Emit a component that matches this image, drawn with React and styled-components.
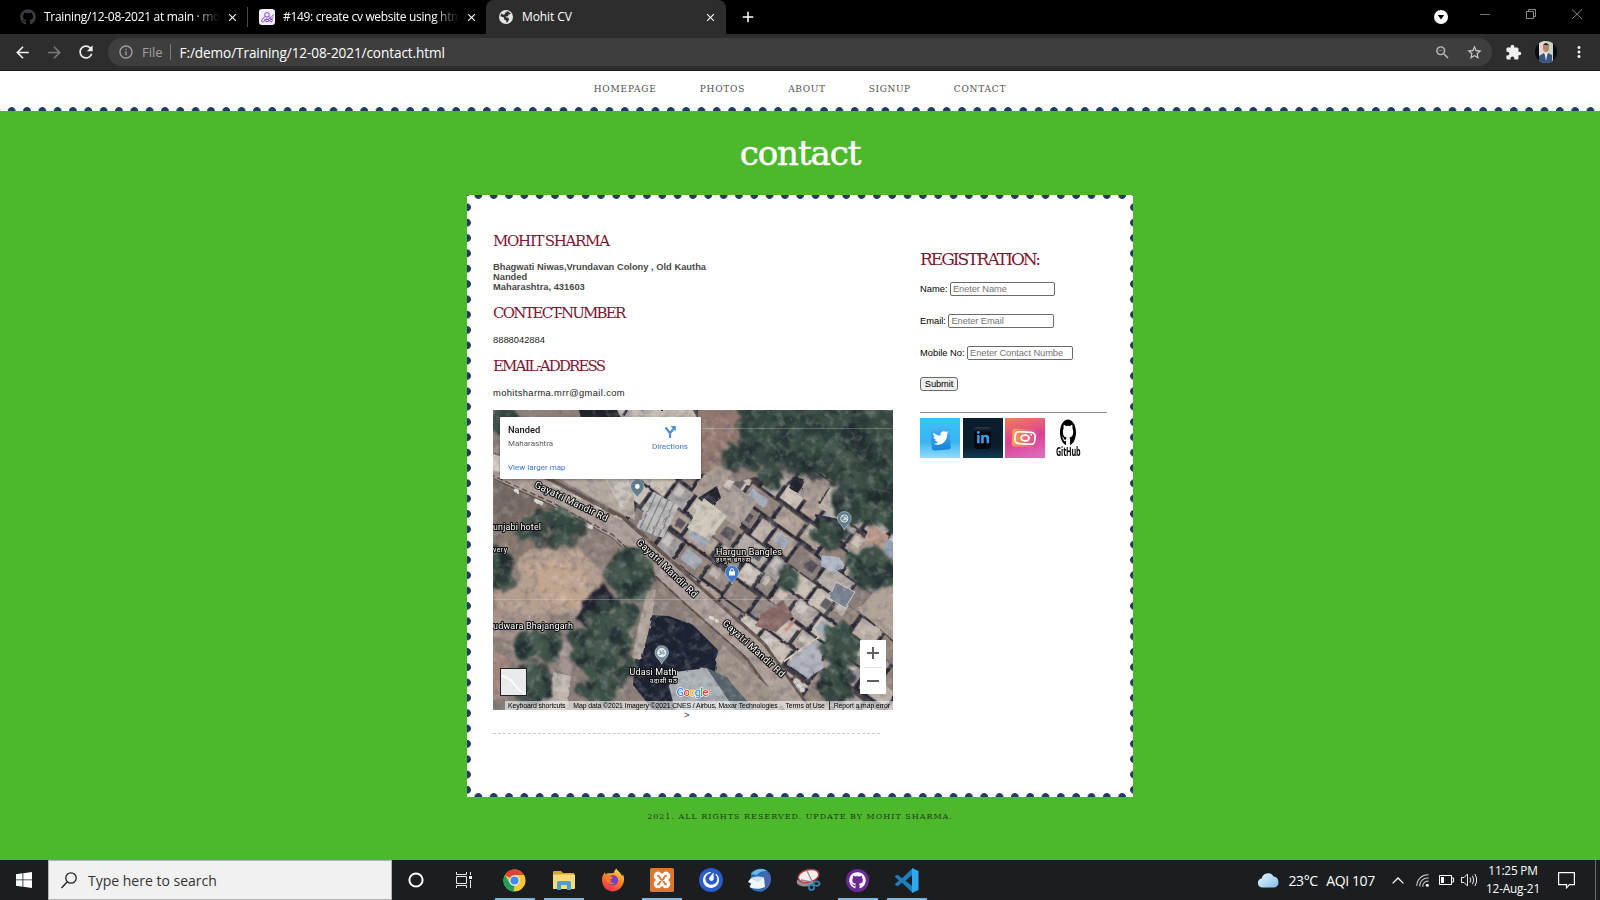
import React from "react";
import styled, { createGlobalStyle, css } from "styled-components";
import { FaGithub, FaTwitter, FaLinkedinIn } from "react-icons/fa";
import {
  MdArrowBack,
  MdArrowForward,
  MdRefresh,
  MdInfoOutline,
  MdZoomOut,
  MdStarBorder,
  MdExtension,
  MdMoreVert,
  MdClose,
  MdAdd,
} from "react-icons/md";
import { SiMattermost } from "react-icons/si";

const UI = `"Open Sans", "Noto Sans", sans-serif`;
const SLAB = `"DejaVu Serif", serif`;
const ARIAL = `"Liberation Sans", Arial, sans-serif`;
const GREEN = "#4eb82d";
const NAVY = "#253a63";

const GlobalStyle = createGlobalStyle`
  * { box-sizing: border-box; }
  body { margin: 0; background: ${GREEN}; overflow: hidden; }
  h1, h2, h3, p { margin: 0; }
  svg { display: block; }
`;

const Screen = styled.div`
  width: 1600px;
  height: 900px;
  display: flex;
  flex-direction: column;
  overflow: hidden;
`;

/* ---------- browser chrome ---------- */

const TabStrip = styled.div`
  height: 34px;
  flex: none;
  display: flex;
  background: #000;
  color: #fff;
  font: 12px ${UI};
`;

const Tab = styled.div`
  width: ${(p) => p.$width}px;
  padding-left: ${(p) => p.$pad}px;
  display: flex;
  align-items: center;
  flex: none;
  border-radius: 8px 8px 0 0;
  background: ${(p) => (p.$active ? "#2d2d2d" : "transparent")};
`;

const Favicon = styled.span`
  width: 16px;
  height: 16px;
  flex: none;
  margin-right: 8px;
  display: grid;
  place-items: center;
  border-radius: 3px;
  color: ${(p) => p.$color || "#fff"};
  background: ${(p) => p.$bg || "transparent"};
`;

const TabTitle = styled.span`
  width: 180px;
  padding-bottom: 1px;
  overflow: hidden;
  white-space: nowrap;
  letter-spacing: ${(p) => p.$track}px;
  ${(p) =>
    p.$fade &&
    css`
      mask-image: linear-gradient(90deg, #000 150px, transparent 176px);
    `}
`;

const TabClose = styled(MdClose)`
  margin-left: 2px;
  flex: none;
`;

const TabDivider = styled.i`
  width: 1px;
  height: 20px;
  margin: 7px 0 0;
  background: #4a4a4a;
`;

const NewTab = styled.div`
  width: 44px;
  display: grid;
  place-items: center;
`;

const WindowControls = styled.div`
  margin-left: auto;
  display: flex;
  align-items: center;
`;

const Toolbar = styled.div`
  height: 37px;
  flex: none;
  display: flex;
  align-items: center;
  background: #2d2d2d;
  border-bottom: 1px solid #1c1c1c;
  color: #e8e8e8;
  padding-left: 12px;
`;

const ToolIcon = styled.span`
  display: grid;
  justify-items: center;
  color: ${(p) => (p.$dim ? "#7b7b7b" : "#f0f0f0")};
  width: ${(p) => p.$w || 32}px;
`;

const AddressBar = styled.div`
  width: 1384px;
  height: 28px;
  display: flex;
  align-items: center;
  border-radius: 14px;
  background: #3e3e3e;
  padding: 0 2px 0 10px;
  font: 13px ${UI};
`;

const Scheme = styled.span`
  color: #a2a2a2;
  margin-left: 8px;
  padding-right: 7px;
  border-right: 1px solid #7a7a7a;
  line-height: 16px;
`;

const Url = styled.span`
  color: #fff;
  margin-left: 9px;
  flex: 1;
  white-space: nowrap;
  font-size: 13.6px;
  letter-spacing: -0.1px;
`;

const Avatar = styled.span`
  width: 22px;
  height: 22px;
  border-radius: 50%;
  overflow: hidden;
  background: #0a0a12;
`;

/* ---------- page ---------- */

const dotsRow = (x, y) => css`
  background-image: radial-gradient(circle at 50% 50%, ${NAVY} 3.5px, transparent 4.3px);
  background-size: 15.333px 12px;
  background-position: ${x}px ${y}px;
  background-repeat: repeat-x;
`;

const SiteNav = styled.nav`
  height: 40px;
  flex: none;
  background-color: #fff;
  ${dotsRow(4, 34)}
  display: flex;
  justify-content: center;
  gap: 43px;
  padding-top: 11px;
  font: 9px/14px ${SLAB};
  color: #4f4f4f;
`;

const NavLink = styled.a`
  letter-spacing: ${(p) => p.$track}px;
`;

const Main = styled.main`
  flex: 1;
  min-height: 0;
  display: flex;
  flex-direction: column;
  align-items: center;
  background: ${GREEN};
`;

const PageTitle = styled.h1`
  height: 84px;
  padding-top: 18px;
  font: 400 34px/48px ${SLAB};
  color: #fff;
  letter-spacing: -1.05px;
  -webkit-text-stroke: 0.5px #fff;
`;

const Card = styled.section`
  width: 666px;
  height: 602px;
  flex: none;
  display: flex;
  padding: 0 26px;
  background-color: #fff;
  background-image: radial-gradient(circle, ${NAVY} 3.5px, transparent 4.3px),
    radial-gradient(circle, ${NAVY} 3.5px, transparent 4.3px),
    radial-gradient(circle, ${NAVY} 3.5px, transparent 4.3px),
    radial-gradient(circle, ${NAVY} 3.5px, transparent 4.3px);
  background-size: 15.333px 12px, 15.333px 12px, 12px 15.333px, 12px 15.333px;
  background-position: 3.7px -6px, 3.7px 596px, -6px 4.7px, 660.5px 4.7px;
  background-repeat: repeat-x, repeat-x, repeat-y, repeat-y;
`;

const Left = styled.div`
  width: 400px;
  padding-top: 37px;
  display: flex;
  flex-direction: column;
`;

const Heading = styled.h2`
  font: 400 ${(p) => p.$size || 15}px/18px ${SLAB};
  letter-spacing: ${(p) => p.$track}px;
  word-spacing: -2px;
  margin-top: ${(p) => p.$top || 0}px;
  color: #7c1632;
  white-space: nowrap;
  align-self: flex-start;
`;

const Detail = styled.p`
  font: ${(p) => (p.$bold ? 700 : 400)} 9.33px/10px ${ARIAL};
  color: ${(p) => (p.$bold ? "#484848" : "#222")};
  letter-spacing: ${(p) => p.$track}px;
  margin: ${(p) => p.$margin};
  align-self: flex-start;
`;

const MapFrame = styled.div`
  position: relative;
  width: 400px;
  height: 300px;
  overflow: hidden;
  background: #857870;
  font-family: Roboto, sans-serif;
`;

const PlaceCard = styled.div`
  position: absolute;
  left: 7px;
  top: 7px;
  width: 201px;
  height: 62px;
  padding: 7px 13px 0 8px;
  display: flex;
  justify-content: space-between;
  background: #fff;
  border-radius: 1px;
  box-shadow: 0 1px 3px rgba(0, 0, 0, 0.35);
  font-size: 8px;
`;

const PlaceText = styled.div`
  display: flex;
  flex-direction: column;
  color: #5b5b5b;
  line-height: 10px;
`;

const PlaceName = styled.b`
  font: 500 9.3px/11px Roboto, sans-serif;
  color: #111;
  margin-bottom: 4px;
`;

const BlueLink = styled.span`
  color: #3d73c8;
  margin-top: ${(p) => p.$top || 0}px;
`;

const Directions = styled.div`
  display: flex;
  flex-direction: column;
  align-items: center;
  gap: 4px;
  line-height: 10px;
  padding-top: 1px;
`;

const ZoomControl = styled.div`
  position: absolute;
  right: 7px;
  top: 230px;
  width: 26px;
  height: 54px;
  background: #fff;
  border-radius: 1px;
`;

const Thumb = styled.div`
  position: absolute;
  left: 7px;
  top: 258px;
  width: 27px;
  height: 28px;
  border: 1px solid #222;
  background: #e8eaed;
`;

const Attribution = styled.div`
  position: absolute;
  right: 0;
  bottom: 0;
  width: 388px;
  height: 9px;
  padding: 0 3px;
  display: flex;
  justify-content: space-between;
  background: rgba(245, 245, 245, 0.62);
  color: #000;
  font: 6.9px/9px ${ARIAL};
  letter-spacing: -0.11px;
  white-space: nowrap;
`;

const ReportLink = styled.span`
  margin-left: -4px;
  padding-left: 4px;
  border-left: 1px solid #333;
`;

const Stray = styled.span`
  padding-left: 191px;
  font: 9.33px/10px ${ARIAL};
  color: #333;
`;

const Dashed = styled.div`
  width: 387px;
  margin-top: 12.5px;
  border-top: 1px dashed #c8c8c8;
`;

const Right = styled.div`
  width: 187px;
  margin-left: 27px;
  padding-top: 55px;
  font: 9.33px ${ARIAL};
  color: #000;
`;

const Form = styled.form`
  padding-top: 14px;
`;

const Field = styled.label`
  height: 14px;
  margin-bottom: 18px;
  display: flex;
  align-items: center;
  gap: 2.5px;
  white-space: nowrap;
`;

const Input = styled.input`
  width: 105.5px;
  height: 14px;
  padding: 0 2px;
  border: 1px solid #6a6a6a;
  border-radius: 2px;
  background: #fff;
  font: 9.33px ${ARIAL};
  letter-spacing: -0.1px;
  &::placeholder {
    color: #757575;
    opacity: 1;
  }
`;

const Submit = styled.button`
  display: block;
  width: 38px;
  height: 14px;
  margin-top: -1px;
  padding: 0;
  border: 1px solid #6a6a6a;
  border-radius: 3px;
  background: #efefef;
  font: 9.33px/11px ${ARIAL};
  letter-spacing: -0.1px;
  color: #000;
`;

const Rule = styled.hr`
  margin: 21px 0 5px;
  border: 0;
  border-top: 1px solid #8a8a8a;
`;

const Socials = styled.div`
  display: flex;
  gap: 2.6px;
`;

const SocialTile = styled.div`
  width: 40px;
  height: 40px;
  display: flex;
  flex-direction: column;
  align-items: center;
  justify-content: center;
  overflow: hidden;
  background: ${(p) => p.$bg};
`;

const Badge = styled.span`
  width: ${(p) => p.$w}px;
  height: ${(p) => p.$h}px;
  display: grid;
  place-items: center;
  border-radius: 3px;
  background: ${(p) => p.$bg};
  transform: rotate(${(p) => p.$tilt || 0}deg);
`;

const TallGithub = styled(FaGithub)`
  width: 16px;
  height: 27px;
  flex: none;
`;

const GithubWord = styled.b`
  font: 700 12px/12px "Open Sans", sans-serif;
  letter-spacing: -0.3px;
  transform: scaleX(0.6);
  color: #000;
`;

const Footer = styled.footer`
  padding-top: 14px;
  font: 8px/12px ${SLAB};
  color: #1d3d17;
  letter-spacing: 0.98px;
`;

/* ---------- taskbar ---------- */

const Taskbar = styled.div`
  height: 40px;
  flex: none;
  display: flex;
  background: #1a1e20;
  color: #fff;
  font: 14px ${UI};
`;

const TaskCell = styled.div`
  width: ${(p) => p.$w || 49}px;
  height: 40px;
  display: grid;
  place-items: center;
  flex: none;
`;

const AppCell = styled(TaskCell)`
  background: ${(p) =>
    p.$open ? "linear-gradient(#7cb4e4, #7cb4e4) 50% 100% / 40px 2px no-repeat" : "none"};
`;

const SearchBox = styled.div`
  width: 344px;
  display: flex;
  align-items: center;
  gap: 11px;
  padding-left: 12px;
  background: #f1f1f1;
  border: 1px solid #b5b5b5;
  color: #333;
  font-size: 14px;
`;

const Tray = styled.div`
  margin-left: auto;
  display: flex;
  align-items: center;
`;

const Weather = styled.div`
  display: flex;
  align-items: center;
  gap: 8.5px;
  width: 130px;
  white-space: nowrap;
  letter-spacing: -0.4px;
`;

const TrayIcon = styled.span`
  width: ${(p) => p.$w}px;
  display: grid;
  place-items: center;
`;

const Clock = styled.div`
  width: 60px;
  text-align: center;
  font-size: 11.8px;
  line-height: 18px;
  white-space: nowrap;
  letter-spacing: -0.2px;
  padding: 0 0 3px;
`;

const ShowDesktop = styled.i`
  width: 5px;
  height: 40px;
  border-left: 1px solid #6d7072;
`;

/* ---------- satellite map ---------- */

const rng = (seed) => () => {
  seed = (seed * 16807) % 2147483647;
  return seed / 2147483647;
};

const ROOFS = ["#ab9e95", "#bdb2a8", "#988b84", "#b2aaa5", "#8b7e79", "#cbc1b6", "#a5a0a0", "#93847b", "#b0a095"];

function buildRoofs() {
  const r = rng(4711);
  const out = [];
  for (let v = -260; v < 260; v += 22) {
    let u = -260 + r() * 10;
    while (u < 260) {
      const w = 14 + r() * 22;
      const h = 16 + r() * 6;
      out.push({ u, v: v + r() * 4, w, h, fill: ROOFS[Math.floor(r() * ROOFS.length)], cut: r(), tint: r() });
      u += w + 1 + r() * 4;
    }
  }
  return out;
}
const roofs = buildRoofs();

function buildTrees(areas, seed) {
  const r = rng(seed);
  const cols = ["#33463f", "#3d5347", "#2b3b36", "#4a5c51", "#394f43", "#1f2b2e"];
  const out = [];
  areas.forEach(([cx, cy, rx, ry, n]) => {
    for (let i = 0; i < n; i++) {
      const a = r() * Math.PI * 2;
      const d = Math.sqrt(r());
      out.push({
        x: cx + Math.cos(a) * rx * d,
        y: cy + Math.sin(a) * ry * d,
        s: 3 + r() * 6,
        fill: cols[Math.floor(r() * cols.length)],
      });
    }
  });
  return out;
}
const trees = buildTrees(
  [
    [60, 118, 32, 16, 50],
    [6, 160, 12, 16, 22],
    [138, 165, 19, 24, 60],
    [122, 205, 20, 16, 40],
    [108, 250, 30, 42, 120],
    [46, 238, 20, 16, 40],
    [40, 275, 16, 20, 36],
    [346, 232, 17, 20, 64],
    [340, 272, 15, 18, 36],
    [378, 160, 21, 18, 54],
    [335, 125, 12, 10, 24],
    [277, 70, 8, 7, 14],
    [10, 10, 12, 10, 16],
    [296, 167, 6, 6, 10],
  ],
  99
);
const forest = buildTrees([[325, 22, 84, 42, 260], [375, 75, 38, 38, 130], [250, 48, 18, 10, 26]], 1234);

function Pin({ x, y, fill, children }) {
  return (
    <g transform={`translate(${x} ${y})`}>
      <path d="M0 11.5 C-1 7.6 -6.8 5 -6.8 -0.2 A6.8 6.8 0 0 1 6.8 -0.2 C6.8 5 1 7.6 0 11.5Z" fill={fill} stroke="#dfe6ea" strokeWidth=".5" />
      {children}
    </g>
  );
}

function Label({ x, y, w, size = 9.6, rotate = 0, children }) {
  return (
    <text
      transform={`translate(${x} ${y}) rotate(${rotate})`}
      fontSize={size}
      textLength={w}
      fill="#fff"
      stroke="#111"
      strokeWidth="2.2"
      strokeLinejoin="round"
      paintOrder="stroke"
    >
      {children}
    </text>
  );
}

function Satellite() {
  return (
    <svg width="400" height="300" viewBox="0 0 400 300" fontFamily="Roboto, 'Noto Sans', sans-serif">
      <defs>
        <filter id="grain" x="0" y="0" width="100%" height="100%">
          <feTurbulence type="fractalNoise" baseFrequency=".13" numOctaves="4" seed="8" />
          <feColorMatrix values="0 0 0 0 .07  0 0 0 0 .07  0 0 0 0 .12  2.6 0 0 0 -1.2" />
        </filter>
        <filter id="light" x="0" y="0" width="100%" height="100%">
          <feTurbulence type="fractalNoise" baseFrequency=".12" numOctaves="4" seed="31" />
          <feColorMatrix values="0 0 0 0 .9  0 0 0 0 .85  0 0 0 0 .82  0 2.4 0 0 -1.2" />
        </filter>
        <filter id="rough" x="-5%" y="-5%" width="110%" height="110%">
          <feTurbulence type="fractalNoise" baseFrequency=".1" numOctaves="3" seed="3" />
          <feDisplacementMap in="SourceGraphic" scale="10" />
          <feGaussianBlur stdDeviation=".9" />
        </filter>
        <filter id="soft">
          <feTurbulence type="fractalNoise" baseFrequency=".15" numOctaves="2" seed="5" />
          <feDisplacementMap in="SourceGraphic" scale="2.5" />
          <feGaussianBlur stdDeviation=".45" />
        </filter>
        <clipPath id="town">
          <path d="M95 0 L205 0 L205 62 L245 72 L285 60 L330 62 L372 95 L400 122 L400 300 L318 300 L215 183 L130 105 L95 78Z" />
        </clipPath>
      </defs>
      <rect width="400" height="300" fill="#8d8079" />
      <g filter="url(#rough)">
        <path d="M0 70 L60 95 L100 120 L60 140 L0 130Z" fill="#766b64" />
        <path d="M20 140 L85 138 L108 160 L112 185 L92 205 L40 205 L5 200 L0 185 L28 170Z" fill="#b49e8e" />
        <path d="M30 155 L80 150 L98 170 L92 192 L55 196Z" fill="#c2a68f" />
        <path d="M0 120 L45 130 L20 160 L0 150Z" fill="#8a7a6f" />
        <path d="M0 200 L60 205 L40 235 L0 225Z" fill="#a59188" />
        <path d="M0 240 L18 250 L14 285 L0 290Z" fill="#a5867e" />
        <path d="M88 192 L110 172 L130 200 L110 225 L86 212Z" fill="#20242f" />
      </g>
      <g clipPath="url(#town)">
        <rect width="400" height="300" fill="#443e41" />
        <g transform="translate(240 160) rotate(36)" filter="url(#soft)">
          {roofs.map((b, i) => (
            <g key={i}>
              <rect x={b.u - 4} y={b.v + 3} width={b.w} height={b.h} fill="#20232e" opacity=".8" />
              <rect x={b.u} y={b.v} width={b.w} height={b.h} fill={b.fill} stroke="#d6cbc0" strokeWidth=".5" strokeOpacity=".5" />
              {b.cut > 0.6 && <rect x={b.u + 2} y={b.v + 2} width={b.w * 0.4} height={b.h * 0.5} fill="#ded8d1" opacity=".6" />}
              {b.cut < 0.22 && <rect x={b.u + b.w * 0.5} y={b.v + 5} width={b.w * 0.35} height={b.h * 0.5} fill="#3f3f49" opacity=".75" />}
              {b.tint > 0.95 && <rect x={b.u + 3} y={b.v + 3} width={b.w * 0.6} height={b.h * 0.6} fill="#a4adb9" />}
            </g>
          ))}
        </g>
      </g>
      <g filter="url(#soft)">
        <path d="M86 0 L124 0 L128 8 L88 8Z" fill="#1c2029" />
        <path d="M135 0 L200 0 L205 10 L130 10Z" fill="#c3bbb0" />
        <path d="M66 69 L140 69 L142 110 L122 100Z" fill="#b5aaa0" />
        <path d="M112 69 L134 66 L140 84 L128 98Z" fill="#cbc4ba" />
        <path d="M160 82 L186 96 L170 128 L143 118Z" fill="#bcbcbb" />
        <path d="M163 84 L147 118 M169 87 L153 121 M175 90 L159 125 M181 93 L165 127" stroke="#85878a" strokeWidth="1.4" />
        <path d="M205 0 L247 0 L248 40 L290 58 L284 66 L232 50 L205 66Z" fill="#94796f" />
        <path d="M204 72 L226 54 L240 62 L222 88Z" fill="#a79a91" />
        <path d="M205 88 L224 76 L228 88 L216 98Z" fill="#20242f" />
        <path d="M240 74 L264 92 L246 118 L224 104Z" fill="#aca199" />
        <path d="M211 88 L234 106 L216 130 L194 118Z" fill="#cfc9bb" />
        <path d="M296 78 L302 66 L312 70 L306 84Z" fill="#20242f" />
        <path d="M318 65 L335 78 L322 97 L304 84Z" fill="#a69990" />
        <path d="M340 72 L366 88 L352 110 L325 98Z" fill="#b8afa4" />
        <path d="M361 86 L368 100 L352 112 L350 104Z" fill="#dcdbd8" />
        <path d="M322 104 L350 110 L344 134 L326 132Z" fill="#272b33" />
        <path d="M378 114 L396 126 L388 142 L371 130Z" fill="#b9978a" />
        <path d="M394 128 L400 132 L400 148 L388 142Z" fill="#93a0af" />
        <path d="M327 145 L346 147 L352 156 L340 163 L328 156Z" fill="#b1b8c5" />
        <path d="M343 172 L362 182 L352 198 L336 188Z" fill="#7b8494" stroke="#d0cdc6" />
        <path d="M390 172 L400 178 L400 230 L365 200Z" fill="#b0a397" />
        <path d="M270 203 L290 190 L300 206 L283 222 L262 216Z" fill="#8a6a66" />
        <path d="M291 218 L302 208 L304 211 L293 222Z" fill="#cf9580" />
        <path d="M311 236 L325 230 L331 258 L315 268 L294 254Z" fill="#b0b3bd" />
        <path d="M290 252 L327 226" stroke="#ddd0b4" strokeWidth="2" />
      </g>
      <g filter="url(#soft)">
        <path d="M-4 54 L60 83 L125 117 L200 185 L262 240 L306 302" fill="none" stroke="#62564f" strokeWidth="25" />
        <path d="M-4 55 L60 84 L125 119 L200 186 L262 241 L306 302" fill="none" stroke="#ad9f98" strokeWidth="20" />
        <path d="M-4 64 L60 93 L120 125 L190 192 L250 245 L290 302" fill="none" stroke="#5f4d46" strokeWidth="1.5" strokeDasharray="6 3" />
        <path d="M-4 48 L70 80 L130 110" fill="none" stroke="#cfc7bd" strokeWidth="1.5" strokeDasharray="9 14" />
        <path d="M0 44 L22 50 L22 66 L0 60Z" fill="#d4ccc4" />
        {[[42, 88], [62, 97], [72, 102], [92, 112], [22, 78], [217, 205], [222, 208], [305, 273], [308, 277]].map(([x, y], i) => (
          <rect key={i} x={x} y={y} width={i < 4 ? 10 : 5} height="3.6" rx="1.5" fill="#dad8d5" transform={`rotate(27 ${x} ${y})`} />
        ))}
        <path d="M155 205 L176 206 L200 215 L225 240 L222 262 L196 300 L160 300 L140 275 L143 240Z" fill="#1f2432" />
        <path d="M182 262 L214 258 L242 300 L182 300 L176 276Z" fill="#acb1b5" />
        <path d="M214 258 L244 272 L260 300 L242 300Z" fill="#56636b" />
        <path d="M230 235 L246 250 L262 265 L290 290 L285 300 L262 300 L240 275 L222 250Z" fill="#a09389" />
        <path d="M155 178 L163 180 L158 212 L148 250 L139 248 L146 214Z" fill="#b3a69c" />
        <path d="M72 224 L86 228 L78 266 L64 260Z" fill="#a29490" />
        <path d="M60 262 L78 266 L74 300 L54 300 L58 276Z" fill="#bfb6ad" />
        <path d="M104 128 L132 138 L116 156 L90 145Z" fill="#8f8078" />
      </g>
      <g filter="url(#rough)">
        <path d="M250 0 L404 0 L404 128 L372 98 L345 68 L300 55 L262 44 L246 30Z" fill="#2c3f39" />
        {forest.map((t, i) => (
          <circle key={i} cx={t.x} cy={t.y} r={t.s} fill={t.fill} opacity=".7" />
        ))}
        {trees.map((t, i) => (
          <circle key={i} cx={t.x} cy={t.y} r={t.s} fill={t.fill} opacity=".8" />
        ))}
      </g>
      <rect width="400" height="300" filter="url(#grain)" opacity=".3" />
      <rect width="400" height="300" filter="url(#light)" opacity=".26" />
      <path d="M208 18.5H400M0 189.5H330" stroke="#dfe3e0" strokeWidth=".7" opacity=".4" />

      <Pin x={144.3} y={76.5} fill="#607d8b">
        <circle r="2.4" fill="#fff" />
      </Pin>
      <Pin x={351.3} y={108.5} fill="#607d8b">
        <circle r="3.6" fill="none" stroke="#e9eef0" strokeWidth="1" />
        <path d="M-2 -1.5H0V1.5H-2M1 -1.8V1.8M2.4 -1V2" fill="none" stroke="#e9eef0" strokeWidth=".9" />
      </Pin>
      <Pin x={239} y={162.5} fill="#3f78c9">
        <path d="M-3 -1.2H3V3H-3Z" fill="#fff" />
        <path d="M-1.6 -1.2V-2.4A1.6 1.6 0 0 1 1.6 -2.4V-1.2" fill="none" stroke="#fff" strokeWidth=".9" />
      </Pin>
      <Pin x={168.7} y={242.7} fill="#78909c">
        <circle r="4.6" fill="#e9eef0" />
        <path d="M-2.8 -1.6C-.6 -2.8 0 -.4 -1.6 0C.4 .2 -.4 2.8 -2.8 1.6M-.8 .4C1 -1 2.6 -1 2.6 .4C2.6 2 .8 1.6 .6 .6M.4 -2.6A1.6 1.6 0 0 0 2.8 -2.8" fill="none" stroke="#607d8b" strokeWidth=".9" />
      </Pin>

      <Label x={41} y={77} w={80} rotate={25.5}>Gayatri Mandir Rd</Label>
      <Label x={143} y={133} w={80} rotate={43.5}>Gayatri Mandir Rd</Label>
      <Label x={229} y={214} w={80} rotate={42}>Gayatri Mandir Rd</Label>
      <Label x={0} y={119.5} w={48} size={9}>unjabi hotel</Label>
      <Label x={0} y={142} w={14} size={7}>very</Label>
      <Label x={0} y={218.5} w={80} size={9}>udwara Bhajangarh</Label>
      <Label x={223} y={144.5} w={66} size={9}>Hargun Bangles</Label>
      <Label x={223} y={152} w={34} size={6.8}>हरगुन बंगल्स</Label>
      <Label x={136.5} y={264.5} w={47} size={9}>Udasi Math</Label>
      <Label x={157} y={272.5} w={27} size={6.8}>उदासी मठ</Label>
      <text x="183.5" y="286" fontSize="11.5" fontWeight="500" textLength="32" stroke="#fff" strokeWidth="1.2" paintOrder="stroke">
        <tspan fill="#4285f4">G</tspan>
        <tspan fill="#ea4335">o</tspan>
        <tspan fill="#fbbc04">o</tspan>
        <tspan fill="#4285f4">g</tspan>
        <tspan fill="#34a853">l</tspan>
        <tspan fill="#ea4335">e</tspan>
      </text>
    </svg>
  );
}

/* ---------- icons ---------- */

const GlobeIcon = () => (
  <svg width="14" height="14" viewBox="0 0 14 14">
    <circle cx="7" cy="7" r="7" fill="#e4e4e4" />
    <path d="M7.6 1.2C9.5 1.4 11 2.4 11.8 4L9.6 4.6L9 6.2L6.6 6.4L7 7.6H9L10 9L9.2 11.6L7.6 12.7L7.2 10.4L5.2 9.4L5 7.6L1.4 6.2C1.6 5.4 2 4.4 2.6 3.6L4.4 4.8L6 4.2L5.8 2.8L7.4 2.4Z" fill="#2d2d2d" />
  </svg>
);

const RosterIcon = () => (
  <svg width="14" height="14" viewBox="0 0 14 14" fill="none" stroke="#7a45c8" strokeWidth="1">
    <circle cx="7" cy="4.8" r="2.3" />
    <path d="M5.2 6.2L1.6 10.2C1 12 3 12.4 4.2 11.2L7 8.4L9.6 11C10.8 12.4 13 11.6 12.2 10L9 6.4" />
    <path d="M4 9.8C7 10.6 11 8.4 13.4 4.6M5.6 11.6C8 12 11 10 13.4 7.4" />
  </svg>
);

const ChromeIcon = () => (
  <svg width="23" height="23" viewBox="0 0 48 48">
    <circle cx="24" cy="24" r="23" fill="#fbc831" />
    <path d="M24 24L4 12.6A23 23 0 0 1 44 12.6H24Z" fill="#dc4437" />
    <path d="M4.1 12.5L14.6 30L24 34.5L22 47A23 23 0 0 1 4.1 12.5Z" fill="#1fa05a" />
    <circle cx="24" cy="24" r="11" fill="#f3f3f3" />
    <circle cx="24" cy="24" r="8.6" fill="#4688f1" />
  </svg>
);

const FolderIcon = () => (
  <svg width="22" height="19" viewBox="0 0 22 19">
    <path d="M0 1Q0 0 1 0H8L10 2H21V18H0Z" fill="#dda32c" />
    <path d="M0 3.5H22V17Q22 18 21 18H0Z" fill="#fbdc74" />
    <path d="M4 19V12Q4 10 6 10H16Q18 10 18 12V19H14V15Q14 14 13 14H9Q8 14 8 15V19Z" fill="#4b9fd5" />
  </svg>
);

const FirefoxIcon = () => (
  <svg width="24" height="24" viewBox="0 0 24 24">
    <defs>
      <linearGradient id="fx" x1=".8" y1="0" x2=".3" y2="1">
        <stop offset="0" stopColor="#ffe14d" />
        <stop offset=".45" stopColor="#ff8a1f" />
        <stop offset="1" stopColor="#f0264f" />
      </linearGradient>
    </defs>
    <path d="M1 12.5C.8 9 2 6.5 4 4.2L4.4 6.4C5.4 5.4 6.6 5 8 5.2L12.8 5C13.2 3 14.2 1.4 15.6 .4C16 3 20 4.2 21 8L22 6.4C23.2 9 23.4 11.6 22.6 14.6C21 20.4 16.6 23.4 12 23.4C6 23.4 1.4 19 1 12.5Z" fill="url(#fx)" />
    <circle cx="12" cy="12.2" r="5.2" fill="#7a3fc4" />
    <path d="M5 9C8 7.4 10 8 12 10L9.4 11.4C9 14 11 15.6 14 14.8C11 18 5.4 16 5 9Z" fill="#ff7b28" />
  </svg>
);

const XamppIcon = () => (
  <svg width="24" height="24" viewBox="0 0 24 24">
    <rect width="24" height="24" rx="1.5" fill="#dd7630" />
    <path d="M8 8.2V8M16 8.2V8M8 16V15.8M16 16V15.8M8 8L16 16M16 8L8 16" stroke="#fff" strokeWidth="8.4" strokeLinecap="round" strokeLinejoin="round" />
    <path d="M7.8 7.6C10.6 7.6 9.4 12 12 12S13.4 7.600 16.2 7.6M7.8 16.4C10.6 16.4 9.4 12 12 12S13.4 16.4 16.2 16.4" fill="none" stroke="#dd7630" strokeWidth="1.9" strokeLinecap="round" />
  </svg>
);

const ThunderbirdIcon = () => (
  <svg width="25" height="24" viewBox="0 0 25 24">
    <path d="M4 5C8 0 18 -1 22.5 5C26 12 23 21 15 23.5C10 24.5 4 22 2.5 18L4 12Z" fill="#2c6db5" />
    <path d="M4 6C9 0 17 0 20 3C16 2.6 12 4 10 7Z" fill="#6fb9e6" />
    <path d="M15 23C22 21 25 14 23.4 8C21 5 17 5 14 7L19 10L18 18Z" fill="#4b64ae" />
    <path d="M.8 14L4 10L10 13L17 9.5L18 19C12 21.6 6 21 2.6 19L4.4 15.5Z" fill="#f4f6f8" />
    <path d="M4 10C8 8 13 8 17 9.5L11 14Z" fill="#cfdfee" />
  </svg>
);

const SnipIcon = () => (
  <svg width="25" height="24" viewBox="0 0 25 24">
    <ellipse cx="9" cy="14" rx="8.4" ry="4.6" fill="#9b8d8f" />
    <ellipse cx="12.5" cy="8" rx="10.5" ry="6.2" transform="rotate(-14 12.5 8)" fill="#f2eeee" stroke="#c9363b" strokeWidth="1.4" />
    <path d="M11 3L17 15M5 12L16 14" stroke="#8a8f96" strokeWidth="1.3" />
    <circle cx="15.5" cy="19.4" r="2.6" fill="none" stroke="#3a7fb2" strokeWidth="1.7" />
    <ellipse cx="20.6" cy="15.6" rx="3" ry="2.2" fill="none" stroke="#3a7fb2" strokeWidth="1.7" />
  </svg>
);

const CodeIcon = () => (
  <svg width="25" height="25" viewBox="0 0 100 100">
    <path d="M74 1L32 41L14 27L4 32V36L20 50L4 64V68L14 73L32 59L74 99V74L46 50L74 27Z" fill="#1c7fc0" />
    <path d="M72 0L98 12V88L72 100Z" fill="#2fa8ee" />
  </svg>
);

const Disc = styled.span`
  width: ${(p) => p.$size || 24}px;
  height: ${(p) => p.$size || 24}px;
  display: grid;
  place-items: center;
  border-radius: 50%;
  background: ${(p) => p.$bg};
  color: #fff;
`;

function App() {
  return (
    <Screen>
      <GlobalStyle />
      <TabStrip>
        <Tab $width={247} $pad={20}>
          <Favicon $color="#3a3d40"><FaGithub size={16} /></Favicon>
          <TabTitle $fade $track={-0.3}>Training/12-08-2021 at main · mo</TabTitle>
          <TabClose size={13} />
        </Tab>
        <TabDivider />
        <Tab $width={238} $pad={11}>
          <Favicon $bg="#f4effc"><RosterIcon /></Favicon>
          <TabTitle $fade $track={-0.33}>#149: create cv website using htm</TabTitle>
          <TabClose size={13} />
        </Tab>
        <Tab $width={240} $pad={12} $active>
          <Favicon><GlobeIcon /></Favicon>
          <TabTitle $track={-0.1}>Mohit CV</TabTitle>
          <TabClose size={13} />
        </Tab>
        <NewTab><MdAdd size={18} /></NewTab>
        <WindowControls>
          <svg width="196" height="34" viewBox="0 0 196 34" fill="none">
            <circle cx="37" cy="17" r="7" fill="#fff" />
            <path d="M33.8 15H40.2L37 19.6Z" fill="#000" />
            <path d="M76 14.5H86" stroke="#777" />
            <path d="M122.5 11.5H129.5V18.5H122.5ZM124.5 11.5V9.5H131.5V16.5H129.5" stroke="#8a8a8a" />
            <path d="M168 9.5L178 19M178 9.5L168 19" stroke="#8a8a8a" />
          </svg>
        </WindowControls>
      </TabStrip>
      <Toolbar>
        <ToolIcon $w={20}><MdArrowBack size={19} /></ToolIcon>
        <ToolIcon $w={44} $dim><MdArrowForward size={19} /></ToolIcon>
        <ToolIcon $w={20}><MdRefresh size={20} /></ToolIcon>
        <ToolIcon $w={12} />
        <AddressBar>
          <MdInfoOutline size={16} color="#a2a2a2" />
          <Scheme>File</Scheme>
          <Url>F:/demo/Training/12-08-2021/contact.html</Url>
          <ToolIcon $w={32}><MdZoomOut size={17} color="#bdbdbd" /></ToolIcon>
          <ToolIcon $w={32}><MdStarBorder size={17} color="#d0d0d0" /></ToolIcon>
        </AddressBar>
        <ToolIcon $w={43}><MdExtension size={17} /></ToolIcon>
        <Avatar>
          <svg width="22" height="22" viewBox="0 0 22 22">
            <rect x="4" width="14" height="22" fill="#c9d6c2" />
            <rect x="4" width="6" height="14" fill="#e8d5d2" />
            <path d="M8 5Q11 1 14 5V9Q11 13 8 9Z" fill="#b98468" />
            <path d="M7.5 5Q11 -1 14.5 5L13 4H9Z" fill="#1b1a24" />
            <path d="M4 22V15L9 12L11 15L13 12L17 14V22Z" fill="#3b5580" />
            <path d="M9.5 12L11 20L12.6 12Z" fill="#e6e9ef" />
          </svg>
        </Avatar>
        <ToolIcon $w={43}><MdMoreVert size={18} /></ToolIcon>
      </Toolbar>

      <SiteNav>
        <NavLink $track={0.82}>HOMEPAGE</NavLink>
        <NavLink $track={0.77}>PHOTOS</NavLink>
        <NavLink $track={0.66}>ABOUT</NavLink>
        <NavLink $track={0.6}>SIGNUP</NavLink>
        <NavLink $track={0.79}>CONTACT</NavLink>
      </SiteNav>
      <Main>
        <PageTitle>contact</PageTitle>
        <Card>
          <Left>
            <Heading $track={-1.28}>MOHIT SHARMA</Heading>
            <Detail $bold $track={0} $margin="12px 0 0">
              Bhagwati Niwas,Vrundavan Colony , Old Kautha
              <br />
              Nanded
              <br />
              Maharashtra, 431603
            </Detail>
            <Heading $track={-1.82} $top={12}>CONTECT-NUMBER</Heading>
            <Detail $track={0} $margin="13px 0 0">8888042884</Detail>
            <Heading $track={-1.88} $top={12}>EMAIL-ADDRESS</Heading>
            <Detail $track={0.38} $margin="13px 0 12px">mohitsharma.mrr@gmail.com</Detail>
            <MapFrame>
              <Satellite />
              <PlaceCard>
                <PlaceText>
                  <PlaceName>Nanded</PlaceName>
                  <span>Maharashtra</span>
                  <BlueLink $top={14}>View larger map</BlueLink>
                </PlaceText>
                <Directions>
                  <svg width="14" height="13" viewBox="0 0 14 13" fill="none" stroke="#4f8fd6" strokeWidth="2.2">
                    <path d="M7 13V8L11 3.5M7 8L2.5 2.5" />
                    <path d="M7.5 1H12.8V6.3Z" fill="#4f8fd6" stroke="none" />
                  </svg>
                  <BlueLink>Directions</BlueLink>
                </Directions>
              </PlaceCard>
              <Thumb>
                <svg width="25" height="26" viewBox="0 0 25 26">
                  <path d="M0 7Q10 9 14 16T25 24" fill="none" stroke="#fff" strokeWidth="1.5" />
                </svg>
              </Thumb>
              <ZoomControl>
                <svg width="26" height="54" viewBox="0 0 26 54" stroke="#5f5f5f" strokeWidth="2">
                  <path d="M7 13H19M13 7V19M7 41H19" />
                  <path d="M4 27.5H22" stroke="#e2e2e2" strokeWidth="1" />
                </svg>
              </ZoomControl>
              <Attribution>
                <span>Keyboard shortcuts</span>
                <span>Map data ©2021 Imagery ©2021 CNES / Airbus, Maxar Technologies</span>
                <span>Terms of Use</span>
                <ReportLink>Report a map error</ReportLink>
              </Attribution>
            </MapFrame>
            <Stray>&gt;</Stray>
            <Dashed />
          </Left>
          <Right>
            <Heading $size={17} $track={-1.98}>REGISTRATION:</Heading>
            <Form>
              <Field>Name:<Input placeholder="Eneter Name" /></Field>
              <Field>Email:<Input placeholder="Eneter Email" /></Field>
              <Field>Mobile No:<Input placeholder="Eneter Contact Numbe" /></Field>
              <Submit type="button">Submit</Submit>
            </Form>
            <Rule />
            <Socials>
              <SocialTile $bg="linear-gradient(180deg,#35c3fb,#3db4f0 60%,#8fdcfb)">
                <Badge $w={19} $h={24} $tilt={-5} $bg="linear-gradient(#4cb8f5,#1683d8)">
                  <FaTwitter size={16} color="#fff" />
                </Badge>
              </SocialTile>
              <SocialTile $bg="linear-gradient(180deg,#0a1d2e,#0b1c2c 70%,#123a55)">
                <Badge $w={17} $h={22} $bg="linear-gradient(#2a3b4c,#05090f 25%)">
                  <FaLinkedinIn size={14} color="#3a9be8" />
                </Badge>
              </SocialTile>
              <SocialTile $bg="linear-gradient(165deg,#f08055,#dc3f94 50%,#e070c0)">
                <Badge $w={26} $h={18} $tilt={3} $bg="linear-gradient(90deg,#f5a04c,#e0449c)">
                  <svg width="22" height="14" viewBox="0 0 22 14" fill="none" stroke="#fff" strokeWidth="1.8">
                    <rect x="1" y="1" width="20" height="12" rx="4" />
                    <ellipse cx="11" cy="7" rx="4" ry="2.9" />
                    <path d="M16.4 3.6H17.8" />
                  </svg>
                </Badge>
              </SocialTile>
              <SocialTile $bg="#fff">
                <TallGithub preserveAspectRatio="none" color="#000" />
                <GithubWord>GitHub</GithubWord>
              </SocialTile>
            </Socials>
          </Right>
        </Card>
        <Footer>2021. ALL RIGHTS RESERVED. UPDATE BY MOHIT SHARMA.</Footer>
      </Main>

      <Taskbar>
        <TaskCell $w={48}>
          <svg width="16" height="16" viewBox="0 0 16 16" fill="#fff">
            <path d="M0 2.2L6.5 1.3V7.5H0ZM7.3 1.2L16 0V7.5H7.3ZM0 8.3H6.5V14.7L0 13.8ZM7.3 8.3H16V16L7.3 14.8Z" />
          </svg>
        </TaskCell>
        <SearchBox>
          <svg width="16" height="17" viewBox="0 0 16 17" fill="none" stroke="#222" strokeWidth="1.3">
            <circle cx="10" cy="6" r="5.2" />
            <path d="M6.3 9.7L.5 16" />
          </svg>
          <span>Type here to search</span>
        </SearchBox>
        <TaskCell $w={48}>
          <svg width="16" height="16" viewBox="0 0 16 16"><circle cx="8" cy="8" r="6.6" fill="none" stroke="#fff" strokeWidth="2" /></svg>
        </TaskCell>
        <TaskCell $w={49}>
          <svg width="17" height="16" viewBox="0 0 17 16" fill="none" stroke="#e8e8e8">
            <path d="M.5 0V2.5H10.5V0M.5 16V13.5H10.5V16M.5 4.5H10.5V11.5H.5ZM14.5 0V3M14.5 8V16" />
            <path d="M13 4H16V7H13Z" fill="#fff" stroke="none" />
          </svg>
        </TaskCell>
        <TaskCell $w={1} />
        <AppCell $open><ChromeIcon /></AppCell>
        <AppCell $open><FolderIcon /></AppCell>
        <AppCell><FirefoxIcon /></AppCell>
        <AppCell $open><XamppIcon /></AppCell>
        <AppCell><Disc $bg="#2a5ccb"><SiMattermost size={16} /></Disc></AppCell>
        <AppCell><ThunderbirdIcon /></AppCell>
        <AppCell><SnipIcon /></AppCell>
        <AppCell $open><Disc $bg="#6b2a93" $size={23}><FaGithub size={17} /></Disc></AppCell>
        <AppCell $open><CodeIcon /></AppCell>
        <Tray>
          <Weather>
            <svg width="23" height="16" viewBox="0 0 23 16">
              <defs>
                <linearGradient id="cl" x2="1" y2="1">
                  <stop stopColor="#eef8fe" />
                  <stop offset="1" stopColor="#7fbde8" />
                </linearGradient>
              </defs>
              <path d="M5 15.5A4.5 4.5 0 0 1 4.6 6.6A6.5 6.5 0 0 1 16.6 4.6A5.6 5.6 0 0 1 17.5 15.5Z" fill="url(#cl)" />
            </svg>
            <span>23°C</span>
            <span>AQI 107</span>
          </Weather>
          <TrayIcon $w={21}>
            <svg width="12" height="7" viewBox="0 0 12 7"><path d="M.6 6.4L6 1L11.4 6.4" fill="none" stroke="#fff" strokeWidth="1.3" /></svg>
          </TrayIcon>
          <TrayIcon $w={29}>
            <svg width="14" height="13" viewBox="0 0 14 13" fill="none" stroke="#c8c8c8" strokeWidth="1.1">
              <path d="M.8 12A11 11 0 0 1 12.5 .8M3.8 12.5A8 8 0 0 1 12.6 4M6.8 12.8A5 5 0 0 1 12.6 7.2" />
              <circle cx="11.3" cy="11.3" r="1.5" fill="#fff" stroke="none" />
            </svg>
          </TrayIcon>
          <TrayIcon $w={19}>
            <svg width="15" height="10" viewBox="0 0 15 10" fill="none" stroke="#fff">
              <path d="M.5 .5H12.5V9.5H.5ZM13 3H14.5V7H13" />
              <path d="M2 2H5V8H2Z" fill="#fff" stroke="none" />
            </svg>
          </TrayIcon>
          <TrayIcon $w={27}>
            <svg width="17" height="14" viewBox="0 0 17 14" fill="none" stroke="#eee">
              <path d="M.5 4.5H3L6.5 1V13L3 9.5H.5ZM9 4.5Q10.6 7 9 9.5M11.5 2.8Q14 7 11.5 11.2M13.8 1Q17.5 7 13.8 13" />
            </svg>
          </TrayIcon>
          <Clock>11:25 PM<br />12-Aug-21</Clock>
          <TrayIcon $w={46}>
            <svg width="17" height="17" viewBox="0 0 17 17" fill="none" stroke="#fff" strokeWidth="1.2">
              <path d="M.6 .6H16.4V12.6H11.5L8.5 15.8V12.6H.6Z" />
            </svg>
          </TrayIcon>
          <TrayIcon $w={6} />
          <ShowDesktop />
        </Tray>
      </Taskbar>
    </Screen>
  );
}

export default App;
